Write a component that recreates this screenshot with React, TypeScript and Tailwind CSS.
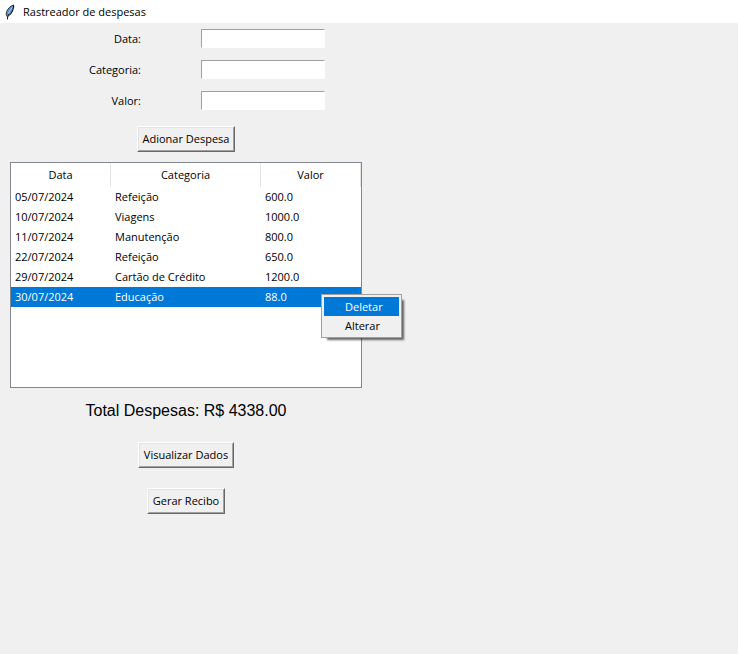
import { useState } from "react";

type Expense = { date: string; category: string; value: string };

const expenses: Expense[] = [
  { date: "05/07/2024", category: "Refeição", value: "600.0" },
  { date: "10/07/2024", category: "Viagens", value: "1000.0" },
  { date: "11/07/2024", category: "Manutenção", value: "800.0" },
  { date: "22/07/2024", category: "Refeição", value: "650.0" },
  { date: "29/07/2024", category: "Cartão de Crédito", value: "1200.0" },
  { date: "30/07/2024", category: "Educação", value: "88.0" },
];

function FeatherIcon() {
  return (
    <svg width="16" height="16" viewBox="0 0 16 16" aria-hidden="true">
      <path d="M11.500 1C8.500 2 5.800 4.500 4.800 7.500C4.200 9.300 4.200 10.800 4.800 12.300C7.200 11 8.800 9.500 9.800 7C10.600 5 11.800 3 11.500 1z" fill="#5b8fd0" />
      <path d="M11.500 1C12.400 3 11.200 5.200 10.400 7C9.400 9.300 8 11 5.600 12.400" fill="none" stroke="#10151d" strokeWidth="1.200" />
      <path d="M11.500 1C8.200 2.200 5.700 4.700 4.700 7.500C4.100 9.500 4 11 4.800 12.400" fill="none" stroke="#2b333f" strokeWidth="1" />
      <path d="M10.200 3.500C8 6 6.500 9 5.700 12" fill="none" stroke="#a9d0fa" strokeWidth="1" />
      <path d="M6.500 10C5.700 11.500 5.400 13.500 5.400 15.500" fill="none" stroke="#10151d" strokeWidth="1" />
    </svg>
  );
}

function Field({ id, label }: { id: string; label: string }) {
  return (
    <div className="flex items-center">
      <label htmlFor={id} className="w-[141px] text-right">
        {label}
      </label>
      <input
        id={id}
        type="text"
        className="ml-15 h-[19px] w-[124px] border border-t-[#a0a0a0] border-r-white border-b-white border-l-[#a0a0a0] bg-white px-0.5 outline-none"
      />
    </div>
  );
}

function TkButton({ children }: { children: string }) {
  return (
    <button
      type="button"
      className="h-[26px] border border-t-white border-r-[#696969] border-b-[#696969] border-l-white bg-[#f0f0f0]"
    >
      <span className="flex h-full items-center border border-t-[#e3e3e3] border-r-[#a0a0a0] border-b-[#a0a0a0] border-l-[#e3e3e3] px-1">
        {children}
      </span>
    </button>
  );
}

function ContextMenu() {
  return (
    <div
      role="menu"
      className="absolute top-[132px] left-[311px] flex w-[81px] flex-col border border-[#a0a0a0] bg-[#f0f0f0] p-0.5 shadow-[4px_4px_2px_-2px_rgba(0,0,0,0.6)]"
    >
      <button type="button" role="menuitem" className="h-[19px] bg-[#0078d7] pl-[21px] text-left text-white">
        Deletar
      </button>
      <button type="button" role="menuitem" className="h-[19px] pl-[21px] text-left">
        Alterar
      </button>
    </div>
  );
}

export default function App() {
  const [selected, setSelected] = useState(5);

  return (
    <div className="flex min-h-screen flex-col bg-[#f0f0f0] font-['Open_Sans','Noto_Sans',sans-serif] text-[11px] leading-4 text-black">
      <header className="flex h-[23px] items-center gap-[5px] bg-white px-0.5">
        <FeatherIcon />
        <h1>Rastreador de despesas</h1>
      </header>

      <main className="flex w-full max-w-[372px] flex-col items-center">
        <form className="flex w-full flex-col gap-3 pt-1.5">
          <Field id="data" label="Data:" />
          <Field id="categoria" label="Categoria:" />
          <Field id="valor" label="Valor:" />
          <div className="flex justify-center pt-1">
            <TkButton>Adionar Despesa</TkButton>
          </div>
        </form>

        <div className="w-full px-2.5 pt-2.5">
          <div className="relative">
            <div className="h-[226px] border border-[#828790] bg-white">
              <table className="w-full table-fixed border-separate border-spacing-0">
                <colgroup>
                  <col className="w-[100px]" />
                  <col className="w-[150px]" />
                  <col className="w-[100px]" />
                </colgroup>
                <thead>
                  <tr className="h-6">
                    <th className="border-r border-[#e5e5e5] p-0 font-normal">Data</th>
                    <th className="border-r border-[#e5e5e5] p-0 font-normal">Categoria</th>
                    <th className="border-r border-[#e5e5e5] p-0 font-normal">Valor</th>
                  </tr>
                </thead>
                <tbody>
                  {expenses.map((e, i) => (
                    <tr
                      key={e.date}
                      onClick={() => setSelected(i)}
                      className={i === selected ? "h-5 bg-[#0078d7] text-white" : "h-5"}
                    >
                      <td className="p-0 pl-1">{e.date}</td>
                      <td className="p-0 pl-1">{e.category}</td>
                      <td className="p-0 pl-1">{e.value}</td>
                    </tr>
                  ))}
                </tbody>
              </table>
            </div>
            <ContextMenu />
          </div>
        </div>

        <p className="pt-[11px] font-['Liberation_Sans',Arial,sans-serif] text-[16px] leading-6">
          Total Despesas: R$ 4338.00
        </p>
        <div className="flex flex-col items-center gap-5 pt-[19px]">
          <TkButton>Visualizar Dados</TkButton>
          <TkButton>Gerar Recibo</TkButton>
        </div>
      </main>
    </div>
  );
}
